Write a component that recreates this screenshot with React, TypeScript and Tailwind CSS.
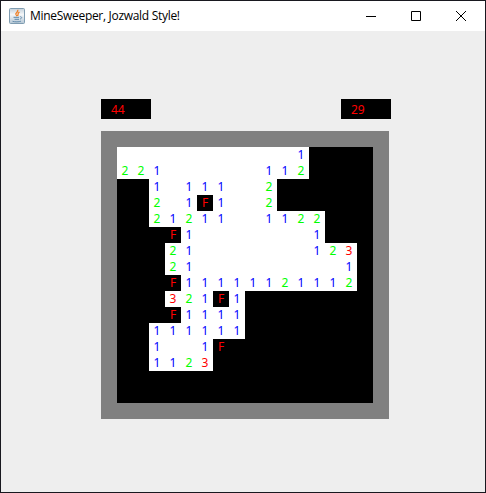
const BOARD = [
  '...........1####',
  '221......112####',
  '##1.111..2######',
  '##2.1F1..2######',
  '##21211..1122###',
  '###F1.......1###',
  '###21.......123#',
  '###21.........1#',
  '###F11111121112#',
  '###321F1########',
  '###F1111########',
  '##111111########',
  '##1..1F#########',
  '##1123##########',
  '################',
  '################',
];

const STYLES: Record<string, string> = {
  '.': 'bg-white',
  '#': 'bg-black',
  '1': 'bg-white text-[#0000ff]',
  '2': 'bg-white text-[#00ff00]',
  '3': 'bg-white text-[#ff0000]',
  F: 'bg-black text-[#ff0000]',
};

function JavaIcon() {
  return (
    <svg width="16" height="16" viewBox="0 0 16 16" fill="none">
      <defs>
        <linearGradient id="tile" x1="0" y1="0" x2="0" y2="1">
          <stop offset="0" stopColor="#c3d0da" />
          <stop offset="0.4" stopColor="#f4f6f8" />
          <stop offset="1" stopColor="#b4c6d4" />
        </linearGradient>
      </defs>
      <rect x="0.5" y="0.5" width="15" height="15" rx="1" fill="url(#tile)" stroke="#7f9cb1" />
      <path d="M8.700 1.800c1.200 2.200-2.800 3-1.800 4.700l1.200 1.700M10.500 4.200C8 5.400 9.800 6 8.600 8" stroke="#ee7f26" strokeWidth="1.300" />
      <path d="M4.500 9.300h5.500M5.500 11.300h4.500" stroke="#5d87a8" strokeWidth="1" />
      <path d="M3.500 13.300c2.500.7 6.500.7 8.500-.1M10.800 8.800c2.700-.5 2.200 1.900.2 2.200" stroke="#5d87a8" strokeWidth="0.900" />
    </svg>
  );
}

function Counter({ value }: { value: number }) {
  return (
    <div className="h-5 w-[50px] bg-black pl-[10px] pt-px text-xs leading-5 text-[#ff0000]">{value}</div>
  );
}

export default function App() {
  return (
    <div className="flex h-[493px] w-[486px] flex-col border border-[#18181f] bg-[#eeeeee] font-['Noto_Sans',sans-serif]">
      <header className="flex h-[30px] shrink-0 items-center bg-white pl-2 text-black">
        <JavaIcon />
        <h1 className="ml-[5px] flex-1 whitespace-nowrap font-['Open_Sans',sans-serif] text-xs tracking-[-0.3px]">
          MineSweeper, Jozwald Style!
        </h1>
        <div className="flex">
          <button aria-label="Minimize" className="flex h-[30px] w-[45px] items-center justify-center">
            <svg width="10" height="10" shapeRendering="crispEdges"><path d="M0 5.500h10" stroke="#000" /></svg>
          </button>
          <button aria-label="Maximize" className="flex h-[30px] w-[45px] items-center justify-center">
            <svg width="10" height="10"><path d="M.5.500h9v9h-9z" stroke="#000" fill="none" /></svg>
          </button>
          <button aria-label="Close" className="flex h-[30px] w-[46px] items-center justify-center">
            <svg width="10" height="10"><path d="M0 0l10 10M10 0L0 10" stroke="#000" /></svg>
          </button>
          <span className="w-px" />
        </div>
      </header>
      <main className="pl-[100px] pt-[68px]">
        <div className="flex w-[290px] justify-between">
          <Counter value={44} />
          <Counter value={29} />
        </div>
        <div className="mt-3 grid w-72 grid-cols-[repeat(16,16px)] border-16 border-[#808080]">
          {BOARD.flatMap((row, y) =>
            [...row].map((cell, x) => (
              <div key={`${y}-${x}`} className={`flex h-4 w-4 items-center justify-center text-xs leading-4 ${STYLES[cell]}`}>
                {cell === '.' || cell === '#' ? null : cell}
              </div>
            )),
          )}
        </div>
      </main>
    </div>
  );
}
